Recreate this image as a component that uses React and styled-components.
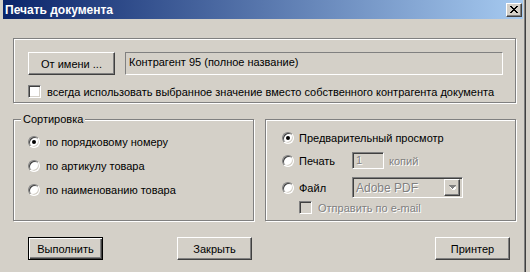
import styled, { createGlobalStyle, css } from 'styled-components';

const GlobalStyle = createGlobalStyle`
  html, body {
    margin: 0;
    padding: 0;
    background: #d4d0c8;
  }
  body {
    font-family: "Liberation Sans", Arial, sans-serif;
    font-size: 11px;
    color: #000;
  }
`;

const raised = css`
  border: 1px solid;
  border-color: #fff #404040 #404040 #fff;
  box-shadow: inset -1px -1px 0 #808080, inset 1px 1px 0 #d4d0c8;
`;

const sunken = css`
  border: 1px solid;
  border-color: #808080 #fff #fff #808080;
  box-shadow: inset 1px 1px 0 #404040, inset -1px -1px 0 #d4d0c8;
`;

const etched = css`
  border: 1px solid #808080;
  box-shadow: inset 1px 1px 0 #fff, 1px 1px 0 #fff;
`;

const disabledText = css`
  color: #808080;
  text-shadow: 1px 1px 0 #fff;
`;

const Window = styled.div`
  width: 526px;
  height: 280px;
  box-sizing: border-box;
  background: #d4d0c8;
  border-right: 1px solid #404040;
  box-shadow: inset -1px 0 0 #808080;
  padding: 0 2px 0 3px;
  display: flex;
  flex-direction: column;
`;

const TitleBar = styled.div`
  height: 19px;
  display: flex;
  align-items: center;
  justify-content: space-between;
  padding: 0 1px 0 2px;
  background: linear-gradient(to right, #0a246a, #a6caf0);
  color: #fff;
  font-weight: bold;
  font-size: 12px;
`;

const CloseButton = styled.div`
  width: 16px;
  height: 14px;
  box-sizing: border-box;
  background: #d4d0c8;
  ${raised};
  display: flex;
  align-items: center;
  justify-content: center;
`;

const Body = styled.div`
  padding: 19px 7px 0 10px;
  display: flex;
  flex-direction: column;
`;

const TopGroup = styled.div`
  height: 65px;
  box-sizing: border-box;
  ${etched};
  padding: 13px 12px 0 14px;
`;

const Row = styled.div`
  display: flex;
  align-items: center;
  gap: ${(p) => p.$gap || 0}px;
  margin-top: ${(p) => p.$mt || 0}px;
  height: ${(p) => (p.$h ? `${p.$h}px` : 'auto')};
`;

const Button = styled.div`
  width: ${(p) => p.$w || 75}px;
  height: 23px;
  box-sizing: border-box;
  display: flex;
  align-items: center;
  justify-content: center;
  background: #d4d0c8;
  margin-left: ${(p) => (p.$auto ? 'auto' : `${p.$ml || 0}px`)};
  ${(p) =>
    p.$default
      ? css`
          border: 1px solid #000;
          box-shadow: inset 1px 1px 0 #fff, inset -1px -1px 0 #404040,
            inset -2px -2px 0 #808080;
        `
      : raised};
`;

const Field = styled.div`
  flex: 1;
  height: 23px;
  box-sizing: border-box;
  border: 1px solid;
  border-color: #808080 #fff #fff #808080;
  background: #d4d0c8;
  padding: 3px 3px 0;
`;

const CheckBox = styled.span`
  width: 13px;
  height: 13px;
  box-sizing: border-box;
  flex: none;
  margin-left: ${(p) => p.$ml || 0}px;
  ${sunken};
  background: ${(p) => (p.$disabled ? '#d4d0c8' : '#fff')};
`;

const Label = styled.span`
  margin-left: ${(p) => p.$ml || 0}px;
  min-width: ${(p) => p.$w || 0}px;
  ${(p) => p.$disabled && disabledText};
`;

const MiddleRow = styled.div`
  display: flex;
  gap: 11px;
  margin-top: 16px;
  height: 102px;
`;

const Group = styled.div`
  position: relative;
  box-sizing: border-box;
  ${etched};
  width: ${(p) => (p.$w ? `${p.$w}px` : 'auto')};
  flex: ${(p) => (p.$w ? 'none' : 1)};
  padding: ${(p) => p.$pad};
  display: flex;
  flex-direction: column;
`;

const Legend = styled.span`
  position: absolute;
  top: -7px;
  left: 7px;
  padding: 0 2px;
  background: #d4d0c8;
`;

const Radio = styled.span`
  width: 12px;
  height: 12px;
  box-sizing: border-box;
  flex: none;
  border-radius: 50%;
  border: 1px solid;
  border-color: #808080 #fff #fff #808080;
  box-shadow: inset 1px 1px 0 #404040, inset -1px -1px 0 #d4d0c8;
  background: #fff;
  display: flex;
  align-items: center;
  justify-content: center;

  &::after {
    content: '';
    width: 4px;
    height: 4px;
    border-radius: 50%;
    background: ${(p) => (p.$checked ? '#000' : 'transparent')};
  }
`;

const SmallInput = styled.div`
  width: 32px;
  height: 17px;
  box-sizing: border-box;
  ${sunken};
  background: #d4d0c8;
  padding: 1px 0 0 3px;
  ${disabledText};
`;

const Select = styled.div`
  width: 111px;
  height: 21px;
  box-sizing: border-box;
  ${sunken};
  background: #d4d0c8;
  display: flex;
  align-items: center;
  justify-content: space-between;
  padding: 0 2px 0 3px;
  font-size: 12px;
  ${disabledText};
`;

const ArrowButton = styled.span`
  width: 16px;
  height: 17px;
  box-sizing: border-box;
  ${raised};
  background: #d4d0c8;
  display: flex;
  align-items: center;
  justify-content: center;
`;

const ButtonRow = styled.div`
  display: flex;
  margin-top: 16px;
  padding: 0 6px 0 15px;
`;

const CloseIcon = () => (
  <svg width="8" height="7" viewBox="0 0 8 7" shapeRendering="crispEdges">
    <path
      d="M0 0h2v1h1v1h2V1h1V0h2v1h-1v1h-1v1h-1v1h1v1h1v1h1v1H6V6H5V5H3v1H2v1H0V6h1V5h1V4h1V3H2V2H1V1H0z"
      fill="#000"
    />
  </svg>
);

const ArrowIcon = () => (
  <svg width="7" height="5" viewBox="0 0 7 5" shapeRendering="crispEdges">
    <path d="M1 2h7v1H1zM2 3h5v1H2zM3 4h3v1H3zM4 5h1v1H4z" fill="#fff" />
    <path d="M0 0h7v1H0zM1 1h5v1H1zM2 2h3v1H2zM3 3h1v1H3z" fill="#808080" />
  </svg>
);

export default function App() {
  return (
    <>
      <GlobalStyle />
      <Window>
        <TitleBar>
          <span>Печать документа</span>
          <CloseButton>
            <CloseIcon />
          </CloseButton>
        </TitleBar>
        <Body>
          <TopGroup>
            <Row $gap={10}>
              <Button $w={87}>От имени ...</Button>
              <Field>Контрагент 95 (полное название)</Field>
            </Row>
            <Row $mt={10}>
              <CheckBox />
              <Label $ml={6}>
                всегда использовать выбранное значение вместо собственного контрагента документа
              </Label>
            </Row>
          </TopGroup>

          <MiddleRow>
            <Group $w={241} $pad="14px 0 0 14px">
              <Legend>Сортировка</Legend>
              <Row $h={16}>
                <Radio $checked />
                <Label $ml={6}>по порядковому номеру</Label>
              </Row>
              <Row $h={16} $mt={8}>
                <Radio />
                <Label $ml={6}>по артикулу товара</Label>
              </Row>
              <Row $h={16} $mt={8}>
                <Radio />
                <Label $ml={6}>по наименованию товара</Label>
              </Row>
            </Group>

            <Group $pad="10px 0 0 16px">
              <Row $h={16}>
                <Radio $checked />
                <Label $ml={5}>Предварительный просмотр</Label>
              </Row>
              <Row $h={17} $mt={6}>
                <Radio />
                <Label $ml={5} $w={53}>Печать</Label>
                <SmallInput>1</SmallInput>
                <Label $ml={5} $disabled>копий</Label>
              </Row>
              <Row $h={21} $mt={8}>
                <Radio />
                <Label $ml={5} $w={53}>Файл</Label>
                <Select>
                  <span>Adobe PDF</span>
                  <ArrowButton>
                    <ArrowIcon />
                  </ArrowButton>
                </Select>
              </Row>
              <Row $mt={3}>
                <CheckBox $disabled $ml={17} />
                <Label $ml={6} $disabled>Отправить по e-mail</Label>
              </Row>
            </Group>
          </MiddleRow>

          <ButtonRow>
            <Button $default>Выполнить</Button>
            <Button $ml={74}>Закрыть</Button>
            <Button $auto>Принтер</Button>
          </ButtonRow>
        </Body>
      </Window>
    </>
  );
}
